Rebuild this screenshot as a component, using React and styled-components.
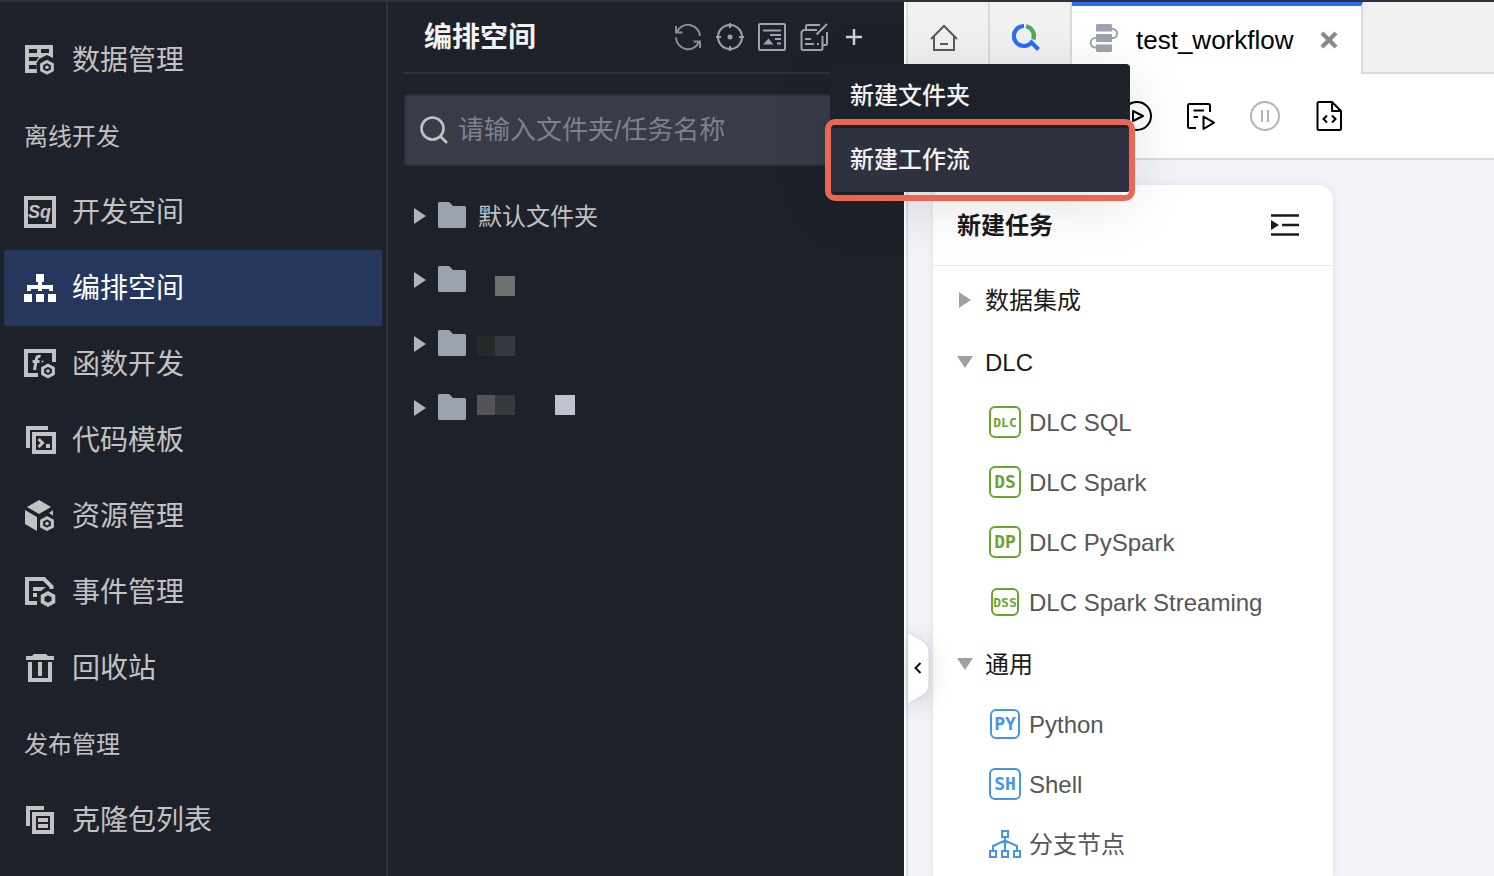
import React from "react";
import styled, { createGlobalStyle } from "styled-components";

const color = {
  night: "#1d2129",
  line: "#2e313e",
  field: "#383c49",
  dimText: "#c2c2c4",
  slate: "#9da2af",
  blue: "#2b6bfb",
  green: "#6ba52f",
  sky: "#4595ea",
  rule: "#dbdbdb",
};

const GlobalStyle = createGlobalStyle`
  *, *::before, *::after { box-sizing: border-box; }
  body {
    margin: 0;
    font-family: "Liberation Sans", "Noto Sans CJK SC", sans-serif;
    font-size: 24px;
    line-height: 1.5;
    background: ${color.night};
  }
  button, input { font: inherit; color: inherit; }
  ul { list-style: none; margin: 0; padding: 0; }
  svg { display: block; flex: none; }
`;

const Page = styled.div`
  display: flex;
  height: 100vh;
  overflow: hidden;
  border-top: 2px solid ${color.line};
`;

const Label = styled.span`
  padding-top: 2px;
  white-space: nowrap;
`;

/* ---------- left navigation ---------- */

const Sidebar = styled.nav`
  flex: none;
  width: 388px;
  padding: 20px 4px 0;
  border-right: 2px solid ${color.line};
  background: ${color.night};
  color: ${color.dimText};
`;

const NavLink = styled.a`
  display: flex;
  align-items: center;
  gap: 16px;
  height: 76px;
  padding: 0 20px;
  border-radius: 3px;
  font-size: 28px;
  text-decoration: none;
  color: ${(p) => (p.$active ? "#fff" : color.dimText)};
  background: ${(p) => (p.$active ? "#25375d" : "transparent")};
`;

const NavGroup = styled.div`
  display: flex;
  align-items: center;
  height: 76px;
  padding: 0 20px;
`;

/* ---------- workspace tree ---------- */

const TreePanel = styled.section`
  position: relative;
  z-index: 2;
  flex: none;
  width: 516px;
  padding: 0 16px;
  background: ${color.night};
`;

const TreeHeader = styled.header`
  display: flex;
  align-items: center;
  justify-content: space-between;
  height: 72px;
  padding: 0 22px 0 20px;
  border-bottom: 2px solid ${color.line};
  color: #f2f2f3;
`;

const TreeTitle = styled.h1`
  margin: 0;
  padding-top: 2px;
  font-size: 28px;
  font-weight: 700;
`;

const Tools = styled.div`
  display: flex;
  align-items: center;
  gap: 14px;
`;

const IconButton = styled.button`
  display: grid;
  place-items: center;
  flex: none;
  width: ${(p) => p.$size || 28}px;
  height: ${(p) => p.$size || 28}px;
  padding: 0;
  border: 0;
  background: none;
  color: ${(p) => p.$color || color.slate};
`;

const MenuAnchor = styled.div`
  position: relative;
`;

const Menu = styled.div`
  position: absolute;
  top: 39px;
  left: -12px;
  z-index: 5;
  width: 300px;
  border-radius: 4px;
  background: ${color.night};
  box-shadow: 0 12px 60px rgba(0, 0, 0, 0.12);
`;

const MenuItem = styled.button`
  position: relative;
  display: flex;
  align-items: center;
  width: 100%;
  height: 64px;
  padding: 0 20px;
  border: 0;
  border-radius: 4px;
  font-weight: 500;
  color: #f2f2f3;
  background: ${(p) => (p.$active ? color.line : "transparent")};
`;

const Callout = styled.span`
  position: absolute;
  inset: -9px -5px;
  border: 6px solid #ea6655;
  border-radius: 10px;
  pointer-events: none;
`;

const SearchBox = styled.label`
  display: flex;
  align-items: center;
  gap: 10px;
  height: 72px;
  margin-top: 20px;
  padding: 0 14px;
  border: 2px solid ${color.line};
  border-radius: 4px;
  background: ${color.field};
`;

const SearchInput = styled.input`
  flex: 1;
  min-width: 0;
  padding: 0;
  border: 0;
  outline: 0;
  background: none;
  font-size: 26px;
  color: #fff;
  &::placeholder { color: #7e818a; opacity: 1; }
`;

const Tree = styled.ul`
  && { padding-top: 18px; }
`;

const TreeRow = styled.li`
  display: flex;
  align-items: center;
  gap: 12px;
  height: 64px;
  padding-left: 10px;
  color: ${color.dimText};
`;

/* ---------- editor ---------- */

const Workspace = styled.main`
  flex: 1;
  min-width: 0;
  display: flex;
  border-left: 2px solid #fff;
`;

const Editor = styled.div`
  position: relative;
  flex: 1;
  min-width: 0;
  display: flex;
  flex-direction: column;
  border-left: 2px solid #dbdce3;
  background: #f2f3f8;
`;

const TabBar = styled.div`
  display: flex;
  height: 72px;
  background: #f1f1f1;
`;

const Tab = styled.button`
  display: flex;
  align-items: center;
  flex: none;
  width: 82px;
  padding: 0 22px;
  border: 0;
  border-right: 2px solid ${color.rule};
  border-bottom: 2px solid ${color.rule};
  background: none;
`;

const ActiveTab = styled.div`
  display: flex;
  align-items: center;
  flex: none;
  gap: 18px;
  width: 291px;
  padding: 0 20px 0 18px;
  border-top: 4px solid ${color.blue};
  border-right: 2px solid ${color.rule};
  background: #fff;
  color: #000;
`;

const TabName = styled.span`
  flex: 1;
  font-size: 26px;
`;

const TabFill = styled.div`
  flex: 1;
  border-bottom: 2px solid ${color.rule};
`;

const Toolbar = styled.div`
  display: flex;
  align-items: center;
  gap: 34px;
  height: 86px;
  padding-left: 214px;
  border-bottom: 2px solid ${color.rule};
  background: #fff;
`;

const Canvas = styled.div`
  flex: 1;
  min-height: 0;
  display: flex;
  padding: 24px 24px 0;
`;

const TaskCard = styled.section`
  width: 402px;
  border: 1px solid #eaebf0;
  border-bottom: 0;
  border-radius: 16px 16px 0 0;
  background: #fff;
  box-shadow: 0 0 8px rgba(30, 40, 80, 0.06);
`;

const CardHeader = styled.header`
  display: flex;
  align-items: center;
  justify-content: space-between;
  height: 81px;
  padding: 0 34px 0 24px;
  border-bottom: 1px solid #e6e7eb;
`;

const CardTitle = styled.h2`
  margin: 0;
  padding-top: 2px;
  font-size: 24px;
  font-weight: 700;
  color: #1a1a1a;
`;

const TaskGroups = styled.div`
  display: flex;
  flex-direction: column;
  gap: 2px;
  padding-top: 4px;
`;

const GroupToggle = styled.button`
  display: flex;
  align-items: center;
  gap: 12px;
  width: 100%;
  height: 60px;
  padding: 0 24px;
  border: 0;
  background: none;
  color: #1a1a1a;
`;

const Task = styled.li`
  display: flex;
  align-items: center;
  gap: 8px;
  height: 60px;
  padding-left: 56px;
  color: #565656;
`;

const BadgeSlot = styled.span`
  display: grid;
  place-items: center;
  flex: none;
  width: 32px;
`;

const Badge = styled.span`
  display: grid;
  place-items: center;
  width: ${(p) => p.$size}px;
  height: ${(p) => p.$size}px;
  border: 2px solid ${(p) => p.$tone};
  border-radius: 6px;
  font: 700 ${(p) => p.$font}px/1 "DejaVu Sans Mono", monospace;
  color: ${(p) => p.$tone};
`;

const CollapseHandle = styled.button`
  position: absolute;
  top: 630px;
  left: 0;
  padding: 0;
  border: 0;
  background: none;
  filter: drop-shadow(0 4px 10px rgba(0, 0, 0, 0.14));
`;

/* ---------- icons ---------- */

const Icon = ({ size = 28, children, ...rest }) => (
  <svg
    width={size}
    height={size}
    viewBox={`0 0 ${size} ${size}`}
    fill="none"
    stroke="currentColor"
    strokeWidth="2"
    aria-hidden="true"
    {...rest}
  >
    {children}
  </svg>
);

const NavIcon = ({ children }) => (
  <Icon size={32} strokeWidth="4">
    {children}
  </Icon>
);

const Hex = ({ x, y, dot = true }) => (
  <g transform={`translate(${x} ${y})`}>
    <path d="M0-5.8 5.4-2.9V2.9L0 5.8-5.4 2.9V-2.9Z" strokeWidth={dot ? 3 : 3.8} />
    {dot && <circle r="1.8" fill="currentColor" stroke="none" />}
  </g>
);

const DataIcon = () => (
  <NavIcon>
    <path
      fill="currentColor"
      stroke="none"
      fillRule="evenodd"
      d="M1 1H29V14L23 11 15 15 12.500 19 13 29H1ZM5 5V9H13V5ZM17 5V9H25V5ZM5 13V17H12L15 13ZM5 21V25H13V21Z"
    />
    <Hex x={23} y={23.3} />
  </NavIcon>
);

const SqlIcon = () => (
  <NavIcon>
    <rect x="2" y="2" width="28" height="28" />
    <text x="4" y="22" fill="currentColor" stroke="none" fontFamily="Liberation Sans" fontWeight="700" fontStyle="italic" fontSize="18">
      Sq
    </text>
  </NavIcon>
);

const FlowIcon = () => (
  <NavIcon>
    <path
      fill="currentColor"
      stroke="none"
      d="M12 2h8v8h-2v3h11v6h-4v-2h-7v2h-4v-2H7v2H3v-6h11v-3h-2ZM0 22h8v8H0ZM12 22h8v8h-8ZM24 22h8v8h-8Z"
    />
  </NavIcon>
);

const FunctionIcon = () => (
  <NavIcon>
    <path d="M30 14V3H2V27H14" />
    <path d="M16.500 8.500Q13 7.500 12.400 11L10.500 22M8.500 13.500H15.500" strokeWidth="3" />
    <circle cx="18.500" cy="13.500" r="1" fill="currentColor" stroke="none" />
    <Hex x={24} y={23} />
  </NavIcon>
);

const TemplateIcon = () => (
  <NavIcon>
    <path d="M4 24V4H24" />
    <rect x="10" y="10" width="20" height="18" />
    <path d="M14.500 15 18.500 19 14.500 23" strokeWidth="3" />
    <path fill="currentColor" stroke="none" d="M22 20h4v4h-4Z" />
  </NavIcon>
);

const CubeIcon = () => (
  <NavIcon>
    <path fill="currentColor" stroke="none" d="M15 0 27 7 15 14 3 7ZM1 10 13 17V31L1 24ZM29 10V15.500L25 13Z" />
    <Hex x={23} y={23.6} />
  </NavIcon>
);

const EventIcon = () => (
  <NavIcon>
    <path d="M13 27H3V3H20L27.500 10.500V13" />
    <path fill="currentColor" stroke="none" d="M9 11H22L17 15H9ZM9 17h4v4H9Z" />
    <Hex x={24} y={23} dot={false} />
  </NavIcon>
);

const TrashIcon = () => (
  <NavIcon>
    <path d="M6 10V28H26V10M16 10V24" />
    <path fill="currentColor" stroke="none" d="M2 4H8L10 2H22L24 4H30V8H2Z" />
  </NavIcon>
);

const CloneIcon = () => (
  <NavIcon>
    <path d="M4 22V4H20" />
    <rect x="10" y="10" width="18" height="18" />
    <path d="M14 16H24M14 22H24" />
  </NavIcon>
);

const RefreshIcon = () => (
  <Icon>
    <path d="M26 13A12 12 0 0 0 3 9M2 3V9.500H8.500M2 14.500A12 12 0 0 0 25 19M26 25V18.500H19.500" />
  </Icon>
);

const TargetIcon = () => (
  <Icon>
    <circle cx="14" cy="14" r="12" />
    <path d="M14 0V5M14 23V28M0 14H5M23 14H28" />
    <circle cx="14" cy="14" r="2.500" fill="currentColor" stroke="none" />
  </Icon>
);

const OutlineIcon = () => (
  <Icon>
    <rect x="1" y="1" width="26" height="26" rx="1" />
    <path d="M5 7.500H23M12 12H23M17 16H23M19 20.500H23" />
    <path fill="currentColor" stroke="none" d="M5 21.500 10.500 15.500 15.500 21.500Z" />
  </Icon>
);

const EditIcon = () => (
  <Icon>
    <path d="M17 7H3.500L1.500 9V25.500Q1.500 27 3 27H21Q22.500 27 22.500 25.500V13M6 6V3.500Q6 2 7.500 2H20M16.500 11.500 27 1M27 9V20.500Q27 22 25.500 22H23M5 16H11M5 21H14M17 21H19" />
  </Icon>
);

const PlusIcon = () => (
  <Icon size={24}>
    <path d="M12 4V20M4 12H20" strokeWidth="2.500" />
  </Icon>
);

const SearchIcon = () => (
  <Icon color="#c2c2c4" strokeWidth="2.600">
    <circle cx="12.500" cy="12.500" r="11" />
    <path d="M20 20 27 27" />
  </Icon>
);

const FolderIcon = () => (
  <Icon>
    <path
      fill="currentColor"
      stroke="none"
      color={color.slate}
      d="M1.500 0H10.500Q11.500 0 12 .7L14 3Q14.500 4 15.500 4H26.500Q28 4 28 5.500V24.500Q28 26 26.500 26H1.500Q0 26 0 24.500V1.500Q0 0 1.500 0Z"
    />
  </Icon>
);

const TreeArrow = () => (
  <svg width="12" height="16" viewBox="0 0 12 16" fill="#b4b4b6" aria-hidden="true">
    <path d="M0 0 12 8 0 16Z" />
  </svg>
);

const GroupArrow = ({ open }) => (
  <svg width="16" height="16" viewBox="0 0 16 16" fill="#a0a0a0" aria-hidden="true">
    <path d={open ? "M0 2H16L8 14Z" : "M2 0 14 8 2 16Z"} />
  </svg>
);

const HomeIcon = () => (
  <Icon color="#5a5a5a">
    <path d="M1 16 14 3 27 16M4 13.500V27H24V13.500M10 21H18" />
  </Icon>
);

const ExploreIcon = () => (
  <Icon strokeWidth="4.200">
    <path stroke={color.blue} d="M12 3A10 10 0 1 0 19.500 19.500L18 18 26.500 26.500" />
    <path stroke="#49ab5b" d="M14 3.200A10 10 0 0 1 21.300 16.500" />
  </Icon>
);

const WorkflowIcon = () => (
  <Icon color={color.slate} overflow="visible">
    <path fill="currentColor" stroke="none" d="M7 -2H21L22 -1V5.500H6V-1ZM6 8H22V16H6ZM6 18.500H22V25L21 26H7L6 25Z" />
    <path d="M22 3H22.500A4.500 4.500 0 0 1 22.500 12H22M6 12H5.500A4.800 4.800 0 0 0 5.500 21.600H6" />
  </Icon>
);

const CloseIcon = () => (
  <Icon size={24} color="#8a8a8a">
    <path d="M5 5 19 19M19 5 5 19" strokeWidth="4.200" />
  </Icon>
);

const RunIcon = () => (
  <Icon size={30}>
    <circle cx="15" cy="15" r="14" />
    <path d="M11 10V20L21 15Z" strokeLinejoin="round" />
  </Icon>
);

const RunListIcon = () => (
  <Icon size={30}>
    <path d="M10 27H3.500Q2 27 2 25.500V4.500Q2 3 3.500 3H22.500Q24 3 24 4.500V11M7.500 9.500H18M7.500 16H12M17.500 15.500V28L28 21.700Z" strokeLinejoin="round" />
  </Icon>
);

const PauseIcon = () => (
  <Icon size={30}>
    <circle cx="15" cy="15" r="14" />
    <path d="M12 9V21M18 9V21" />
  </Icon>
);

const CodeFileIcon = () => (
  <Icon size={30}>
    <path d="M17.500 1H5Q3.500 1 3.500 2.500V27.500Q3.500 29 5 29H25.500Q27 29 27 27.500V10L18 1V10H27" strokeLinejoin="round" />
    <path d="M13 14.500 9.500 18 13 21.500M18 14.500 21.500 18 18 21.500" />
  </Icon>
);

const IndentIcon = () => (
  <Icon color="#1a1a1a" strokeWidth="2.400">
    <path d="M0 4.500H28M11 14H28M0 23.500H28" />
    <path fill="currentColor" stroke="none" d="M0 9 8 14 0 19Z" />
  </Icon>
);

const BranchIcon = () => (
  <Icon size={32} color={color.sky}>
    <path d="M13 3H19V9H13ZM1 23H7V29H1ZM13 23H19V29H13ZM25 23H31V29H25ZM16 9V23M4 23V18L16 12.500 28 18V23" />
  </Icon>
);

/* ---------- content ---------- */

const navItems = [
  { label: "数据管理", icon: DataIcon },
  { group: "离线开发" },
  { label: "开发空间", icon: SqlIcon },
  { label: "编排空间", icon: FlowIcon, active: true },
  { label: "函数开发", icon: FunctionIcon },
  { label: "代码模板", icon: TemplateIcon },
  { label: "资源管理", icon: CubeIcon },
  { label: "事件管理", icon: EventIcon },
  { label: "回收站", icon: TrashIcon },
  { group: "发布管理" },
  { label: "克隆包列表", icon: CloneIcon },
];

// Blocks covering a hidden folder name: [x, y, width, fill]
const hiddenNames = [
  [[17, 28, 20, "#6c7172"], [37, 28, 40, "#1e202b"]],
  [[-1, 24, 18, "#262a2b"], [17, 24, 20, "#363841"], [37, 24, 20, "#1e202b"]],
  [[-1, 19, 18, "#535458"], [17, 19, 20, "#363a3c"], [77, 19, 20, "#c0c3cd"]],
];

const Mosaic = ({ blocks }) => (
  <svg width="98" height="64" viewBox="0 0 98 64" overflow="visible" aria-hidden="true">
    {blocks.map(([x, y, w, fill]) => (
      <rect key={x} x={x} y={y} width={w} height="20" fill={fill} />
    ))}
  </svg>
);

const taskGroups = [
  { name: "数据集成", tasks: [] },
  {
    name: "DLC",
    open: true,
    tasks: [
      { name: "DLC SQL", tag: "DLC", font: 13, tone: color.green },
      { name: "DLC Spark", tag: "DS", tone: color.green },
      { name: "DLC PySpark", tag: "DP", tone: color.green },
      { name: "DLC Spark Streaming", tag: "DSS", size: 28, font: 13, tone: color.green },
    ],
  },
  {
    name: "通用",
    open: true,
    tasks: [
      { name: "Python", tag: "PY", size: 30, tone: color.sky },
      { name: "Shell", tag: "SH", tone: color.sky },
      { name: "分支节点" },
    ],
  },
];

const TaskItem = ({ task }) => (
  <Task>
    <BadgeSlot>
      {task.tag ? (
        <Badge $size={task.size || 32} $font={task.font || 18} $tone={task.tone}>
          {task.tag}
        </Badge>
      ) : (
        <BranchIcon />
      )}
    </BadgeSlot>
    <Label>{task.name}</Label>
  </Task>
);

export default function App() {
  return (
    <>
      <GlobalStyle />
      <Page>
        <Sidebar>
          {navItems.map((item) =>
            item.group ? (
              <NavGroup key={item.group}>
                <Label>{item.group}</Label>
              </NavGroup>
            ) : (
              <NavLink key={item.label} href="#" $active={item.active}>
                <item.icon />
                <Label>{item.label}</Label>
              </NavLink>
            )
          )}
        </Sidebar>

        <TreePanel>
          <TreeHeader>
            <TreeTitle>编排空间</TreeTitle>
            <Tools>
              <IconButton $color="#8f8d88" aria-label="刷新"><RefreshIcon /></IconButton>
              <IconButton aria-label="定位"><TargetIcon /></IconButton>
              <IconButton aria-label="大纲"><OutlineIcon /></IconButton>
              <IconButton aria-label="批量编辑"><EditIcon /></IconButton>
              <MenuAnchor>
                <IconButton $size={24} $color="#d0d0d0" aria-label="新建"><PlusIcon /></IconButton>
                <Menu>
                  <MenuItem>新建文件夹</MenuItem>
                  <MenuItem $active>
                    新建工作流
                    <Callout />
                  </MenuItem>
                </Menu>
              </MenuAnchor>
            </Tools>
          </TreeHeader>
          <SearchBox>
            <SearchIcon />
            <SearchInput type="text" placeholder="请输入文件夹/任务名称" />
          </SearchBox>
          <Tree>
            <TreeRow>
              <TreeArrow />
              <FolderIcon />
              <Label>默认文件夹</Label>
            </TreeRow>
            {hiddenNames.map((blocks, i) => (
              <TreeRow key={i}>
                <TreeArrow />
                <FolderIcon />
                <Mosaic blocks={blocks} />
              </TreeRow>
            ))}
          </Tree>
        </TreePanel>

        <Workspace>
          <Editor>
            <TabBar>
              <Tab aria-label="首页"><HomeIcon /></Tab>
              <Tab aria-label="数据探索"><ExploreIcon /></Tab>
              <ActiveTab>
                <WorkflowIcon />
                <TabName>test_workflow</TabName>
                <IconButton $size={24} aria-label="关闭"><CloseIcon /></IconButton>
              </ActiveTab>
              <TabFill />
            </TabBar>
            <Toolbar>
              <IconButton $size={30} $color="#000" aria-label="运行"><RunIcon /></IconButton>
              <IconButton $size={30} $color="#000" aria-label="批量运行"><RunListIcon /></IconButton>
              <IconButton $size={30} $color="#b3b3b3" aria-label="暂停" disabled><PauseIcon /></IconButton>
              <IconButton $size={30} $color="#000" aria-label="查看代码"><CodeFileIcon /></IconButton>
            </Toolbar>
            <Canvas>
              <TaskCard>
                <CardHeader>
                  <CardTitle>新建任务</CardTitle>
                  <IconButton aria-label="收起"><IndentIcon /></IconButton>
                </CardHeader>
                <TaskGroups>
                  {taskGroups.map((group) => (
                    <div key={group.name}>
                      <GroupToggle aria-expanded={!!group.open}>
                        <GroupArrow open={group.open} />
                        <Label>{group.name}</Label>
                      </GroupToggle>
                      {group.open && (
                        <ul>
                          {group.tasks.map((task) => (
                            <TaskItem key={task.name} task={task} />
                          ))}
                        </ul>
                      )}
                    </div>
                  ))}
                </TaskGroups>
              </TaskCard>
            </Canvas>
            <CollapseHandle aria-label="收起目录">
              <svg width="22" height="72" viewBox="0 0 22 72" fill="none">
                <path d="M0 0 15 9Q21 13 21 20V52Q21 59 15 63L0 72Z" fill="#fff" />
                <path d="M0 0 15 9Q21 13 21 20V52Q21 59 15 63L0 72" stroke="#cfd3dd" />
                <path d="M12.500 31 7.500 36 12.500 41" stroke="#111" strokeWidth="2" />
              </svg>
            </CollapseHandle>
          </Editor>
        </Workspace>
      </Page>
    </>
  );
}
